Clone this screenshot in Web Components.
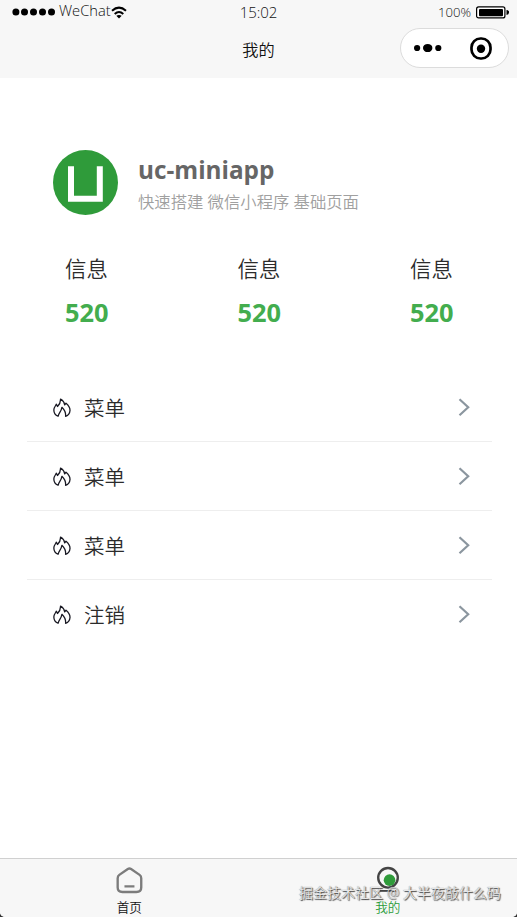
<!DOCTYPE html>
<html lang="zh-CN">
<head>
<meta charset="utf-8">
<title>我的</title>
<style>
html,body{margin:0;padding:0;background:#333}
body{font-family:"Open Sans","Noto Sans CJK SC",sans-serif;color:#2b2b2b;font-weight:350}
</style>
</head>
<body>
<mini-app></mini-app>
<script>
function define(name, html){
  const t=document.createElement('template');
  t.innerHTML=html;
  customElements.define(name, class extends HTMLElement{
    constructor(){super();this.attachShadow({mode:'open'}).append(t.content.cloneNode(true));}
  });
}

define('status-bar', `<style>
:host{display:grid;grid-template-columns:1fr auto 1fr;height:24px;line-height:24px;color:#111;white-space:nowrap}
.left,.right{display:flex;align-items:center}
.left{padding-left:12px}.right{justify-content:flex-end;padding-right:7px}
.carrier{font-size:14.7px;margin-left:4px;height:24px;line-height:21px;width:52px}
.time{font-size:15px;letter-spacing:-.1px}
.pct{font-size:13.1px;margin-right:5px}
svg{display:block}
</style>
<div class="left"><svg width="43" height="8" viewBox="0 0 43 8"><circle cx="3.9" cy="4" r="3.5"/><circle cx="12.5" cy="4" r="3.5"/><circle cx="21.5" cy="4" r="3.5"/><circle cx="30.5" cy="4" r="3.5"/><circle cx="39.5" cy="4" r="3.5"/></svg><span class="carrier">WeChat</span>
<svg width="16" height="13" viewBox="0 0 16 13"><g fill="none" stroke="#000" stroke-width="2"><path d="M1 4.8Q8-1.5 15 4.8M3.7 8Q8 4.1 12.3 8"/></g><path d="M5.3 9.8Q8 8 10.7 9.8L8 12.5z"/></svg></div>
<div class="time">15:02</div>
<div class="right"><span class="pct">100%</span><svg width="34" height="13" viewBox="0 0 34 13"><rect x=".6" y=".9" width="28.3" height="11" rx="2" fill="#fff" stroke="#000" stroke-width="1.2"/><rect x="3" y="3" width="24" height="7.2" rx="1"/><path d="M30.5 4q3 .5 2.5 2.5q0 2-2.5 2.5z"/></svg></div>`);

define('capsule-menu', `<style>
:host{display:flex;align-items:center;justify-content:space-between;box-sizing:border-box;width:109px;height:40px;border:1px solid #dcdcdc;border-radius:20px;background:#fff;padding:0 15px 0 13px}
</style><svg width="28" height="10" viewBox="0 0 28 10"><circle cx="3.1" cy="5" r="3.1"/><ellipse cx="13.7" cy="5" rx="4.7" ry="4.1"/><circle cx="24.3" cy="5" r="3.1"/></svg>
<svg width="23" height="23" viewBox="0 0 23 23"><rect x="1.5" y="1.5" width="19" height="20" rx="9" fill="none" stroke="#000" stroke-width="2.7"/><circle cx="11" cy="11.7" r="4.2"/></svg>`);

define('app-header', `<style>
:host{display:block;height:78px;background:#f7f7f7}
nav{display:grid;grid-template-columns:1fr auto 1fr;height:54px;padding-right:8px;padding-left:8px;color:#111}
h1{margin:0;font-size:16.2px;font-weight:350;line-height:52px}
capsule-menu{justify-self:end;margin-top:4px}
</style><status-bar></status-bar><nav><span></span><h1><slot></slot></h1><capsule-menu></capsule-menu></nav>`);

define('user-profile', `<style>
:host{display:flex;padding:72px 0 0 53px;height:65px;gap:20px;white-space:nowrap}
svg{display:block}
h2{margin:4px 0 0;height:32px;line-height:32px;font-size:24.3px;font-weight:700;color:#666}
p{margin:4px 0 0;line-height:24px;font-size:16.35px;color:#a0a0a0}
</style><svg width="65" height="65" viewBox="0 0 65 65"><circle cx="32.5" cy="32.5" r="32.5" fill="#2f9b3a"/><path d="M18 16.3V48.8H46.8V16.3" fill="none" stroke="#fff" stroke-width="6"/></svg>
<div><h2><slot name="name"></slot></h2><p><slot name="bio"></slot></p></div>`);

define('stat-item', `<style>
:host{display:block;width:43px;white-space:nowrap}
.label{font-size:21.4px;line-height:32px;height:32px}
.value{font-size:25.4px;line-height:34px;margin-top:10px;font-weight:700;color:#43ad4e}
</style><div class="label"><slot></slot></div><div class="value"><slot name="value"></slot></div>`);

define('stat-row', `<style>:host{display:flex;justify-content:space-between;padding:38px 64px 0 65px;height:77px}</style><slot></slot>`);

define('menu-item', `<style>
:host{display:flex;align-items:center;box-sizing:border-box;height:69px;padding:1px 21px 0 26px;border-bottom:1px solid var(--line,#eee)}
.label{font-size:20.5px;line-height:30px;margin-left:13px;flex:1}
svg{display:block}
</style><svg width="18" height="20" viewBox="0 0 18 20" fill="none" stroke="#181822" stroke-width="1.3" stroke-linejoin="round" stroke-linecap="round"><path d="M5 18.2C1.8 16.8.7 14 .9 11.5C1.1 9.4 2.3 8 3.4 6.2L4.5 8.5C6.5 6.5 7.7 4.2 7.5 1.2C10 2.4 11.2 4.3 11.7 6.8L13 5.3C15.5 7.4 17.1 9.3 17 12.5C16.8 15.4 15.5 17.3 12.6 18.3M5.3 18.1C5.2 15.5 8.4 13.7 8.9 9.3C11.6 11.9 13 14 12.6 18.2"/></svg>
<span class="label"><slot></slot></span>
<svg width="13" height="20" viewBox="0 0 13 20"><path d="M1.5 1.2L10.2 9.2L1.5 17.2" fill="none" stroke="#8b969f" stroke-width="2.2"/></svg>`);

define('menu-list', `<style>:host{display:block;margin:43px 25px 0 27px}::slotted(:last-child){--line:transparent}</style><slot></slot>`);

define('tab-item', `<style>
:host{display:flex;flex-direction:column;align-items:center;flex:1;padding-top:7px;color:#111}
.label{font-size:12.6px;line-height:18px;height:18px;margin-top:4px;font-weight:350}
</style><slot name="icon"></slot><span class="label"><slot></slot></span>`);

define('tab-bar', `<style>:host{display:flex;box-sizing:border-box;height:59px;border-top:1px solid #d0d0d0;background:#f7f7f7;overflow:hidden}</style><slot></slot>`);

define('author-mark', `<style>:host{position:absolute;left:299px;top:883px;line-height:20px;font-size:14px;font-weight:350;white-space:nowrap;color:#e6e6e6;text-shadow:1px 1px 1px #444,0 0 1px #777}</style><slot></slot>`);

define('mini-app', `<style>
:host{display:flex;flex-direction:column;position:relative;width:517px;height:917px;overflow:hidden;background:#fff;border-radius:0 0 5px 5px}
main{flex:1}svg{display:block}
</style>
<app-header>我的</app-header>
<main>
<user-profile><span slot="name">uc-miniapp</span><span slot="bio">快速搭建 微信小程序 基础页面</span></user-profile>
<stat-row><stat-item>信息<span slot="value">520</span></stat-item><stat-item>信息<span slot="value">520</span></stat-item><stat-item>信息<span slot="value">520</span></stat-item></stat-row>
<menu-list><menu-item>菜单</menu-item><menu-item>菜单</menu-item><menu-item>菜单</menu-item><menu-item>注销</menu-item></menu-list>
</main>
<tab-bar>
<tab-item><svg slot="icon" width="30" height="32" viewBox="-.5 -.3 30 32"><path d="M13.2 3Q15 1.8 16.8 3L26.2 9.5Q28 10.8 28 13.2V23.5Q28 28.4 22.7 28.4H7.3Q2 28.4 2 23.5V13.2Q2 10.8 3.8 9.5Z" fill="none" stroke="#7c7c7c" stroke-width="2.6"/><path d="M9.5 22.3H20.5" stroke="#7c7c7c" stroke-width="2.5"/></svg>首页</tab-item>
<tab-item style="color:#2a9b39"><svg slot="icon" width="30" height="32" viewBox="0 0 30 32"><circle cx="15" cy="13" r="10.8" fill="none" stroke="#444" stroke-width="2.6"/><circle cx="16.7" cy="15.6" r="6.4" fill="#2f9b3a"/><path d="M6 27.5H24" stroke="#444" stroke-width="2"/></svg>我的</tab-item>
</tab-bar>
<author-mark>掘金技术社区 @ 大半夜敲什么码</author-mark>`);
</script>
</body>
</html>
